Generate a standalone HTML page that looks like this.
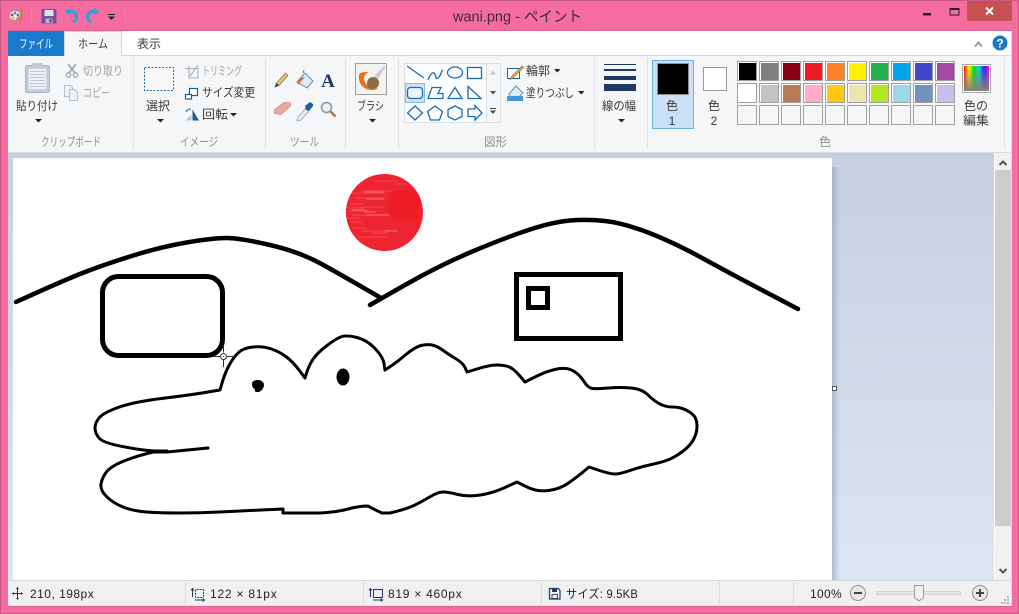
<!DOCTYPE html>
<html lang="ja">
<head>
<meta charset="utf-8">
<title>wani.png - ペイント</title>
<style>
html,body{margin:0;padding:0;width:1019px;height:614px;overflow:hidden;background:#f56c9f}
svg{display:block;position:absolute;left:0;top:0}
text{font-family:"Liberation Sans","Noto Sans CJK JP",sans-serif;font-size:12px;fill:#3a3a3a}
.c{text-anchor:middle}
.g{fill:#8f8f8f;font-size:12px}
.d{fill:#a3a3a3}
.s{font-size:12px;fill:#222;letter-spacing:.3px}
.sh{fill:none;stroke:#1e6db0;stroke-width:1.3}
</style>
</head>
<body>
<svg width="1019" height="614" viewBox="0 0 1019 614" xmlns="http://www.w3.org/2000/svg">
<defs>
<linearGradient id="bg" x1="0" y1="0" x2="0" y2="1"><stop offset="0" stop-color="#c6cfe0"/><stop offset="1" stop-color="#dce6f3"/></linearGradient>
<linearGradient id="shd" x1="0" y1="0" x2="1" y2="0"><stop offset="0" stop-color="#8fa0b8" stop-opacity=".6"/><stop offset="1" stop-color="#8fa0b8" stop-opacity="0"/></linearGradient>
<linearGradient id="rb" x1="0" y1="0" x2="1" y2="0"><stop offset="0" stop-color="#f00"/><stop offset=".2" stop-color="#ff0"/><stop offset=".4" stop-color="#0d0"/><stop offset=".6" stop-color="#0dd"/><stop offset=".8" stop-color="#22e"/><stop offset="1" stop-color="#e0e"/></linearGradient>
<linearGradient id="rb2" x1="0" y1="0" x2="0" y2="1"><stop offset="0" stop-color="#888" stop-opacity="0"/><stop offset="1" stop-color="#8a7f7a"/></linearGradient>
<clipPath id="sun"><circle cx="384.5" cy="212.5" r="38.5"/></clipPath>
</defs>

<!-- window frame -->
<rect x=".5" y=".5" width="1018" height="613" fill="#f56c9f" stroke="#c95a86"/>
<rect x="8" y="30" width="1004" height="1" fill="#d76292"/>
<rect x="8" y="606" width="1004" height="1" fill="#d76292"/>
<rect x="1011" y="31" width="1" height="575" fill="#e0e0e0"/>

<!-- title bar -->
<g>
  <path d="M9 16c0-4 4-6 7-5.500 3 .5 5 2 4.500 5-.5 2-2 1.500-3 2-1 1 0 2.500-2 3-3 .5-6.500-1-6.500-4.500z" fill="#e9e6dc" stroke="#8a8a9c" stroke-width=".8"/>
  <circle cx="12" cy="15" r="1.400" fill="#d33"/><circle cx="15" cy="13" r="1.400" fill="#2a8"/><circle cx="18" cy="15" r="1.300" fill="#36c"/><circle cx="13" cy="18.500" r="1.300" fill="#ea2"/>
  <path d="M22 7.500l-1.500 14" stroke="#e07a20" stroke-width="2"/>
  <rect x="31" y="9" width="1" height="13" fill="#c79ab0"/>
  <rect x="125" y="9" width="1" height="13" fill="#c79ab0"/>
  <path d="M42 9.500h13l1 1v12.500h-14z" fill="#7a4f9f" stroke="#5b4f8c" stroke-width=".8"/>
  <rect x="44.500" y="10" width="9" height="6" fill="#e3e3ee"/>
  <rect x="45.500" y="18.500" width="7" height="4.500" fill="#b9b6c6"/>
  <rect x="49.500" y="19" width="2" height="3.500" fill="#55506a"/>
  <path d="M66 11.500h5.500c3.500 0 5 2.500 5 5s-1.500 4.500-3.500 5.500" fill="none" stroke="#2f9fdf" stroke-width="3"/>
  <path d="M65 11.500l4.500-3.500v7z" fill="#2f9fdf"/>
  <path d="M98 11.500h-5.500c-3.500 0-5 2.500-5 5s1.500 4.500 3.500 5.500" fill="none" stroke="#2f9fdf" stroke-width="3"/>
  <path d="M99 11.500l-4.500-3.500v7z" fill="#2f9fdf"/>
  <rect x="108" y="14" width="7" height="1" fill="#222"/>
  <path d="M108 16.500h7l-3.500 3.500z" fill="#222"/>
  <text x="453" y="21.500" textLength="129" lengthAdjust="spacingAndGlyphs" style="font-size:15px;fill:#3c2c3a">wani.png - ペイント</text>
  <rect x="923" y="13" width="8" height="2.500" fill="#222"/>
  <rect x="950" y="8.500" width="9" height="6.500" fill="none" stroke="#222"/>
  <rect x="949.500" y="8" width="10" height="2" fill="#222"/>
  <rect x="967" y="1" width="45" height="20" fill="#c75050"/>
  <path d="M986 7.500l7 7m0-7l-7 7" stroke="#fff" stroke-width="2"/>
</g>

<!-- tab row -->
<rect x="8" y="31" width="1003" height="24" fill="#fff"/>
<rect x="8" y="55" width="1003" height="1" fill="#d6d8da"/>
<rect x="8" y="31" width="56" height="25" fill="#1979ca"/>
<path d="M64.500 56V31.500H121.500V56" fill="#f5f6f7" stroke="#d6d8da"/>
<rect x="65" y="55" width="56" height="2" fill="#f5f6f7"/>
<text x="19" y="48" textLength="34" lengthAdjust="spacingAndGlyphs" style="fill:#fff">ファイル</text>
<text x="78" y="48" textLength="30" lengthAdjust="spacingAndGlyphs">ホーム</text>
<text x="137" y="48" textLength="24" lengthAdjust="spacingAndGlyphs">表示</text>
<path d="M975 46.500l3.500-4 3.500 4" fill="none" stroke="#9a9a9a" stroke-width="2"/>
<circle cx="1000" cy="43" r="7.500" fill="#1b78c8"/>
<text x="1000" y="47.500" class="c" style="font-size:12px;font-weight:bold;fill:#fff">?</text>

<!-- ribbon -->
<rect x="8" y="56" width="1003" height="96" fill="#f5f6f7"/>
<rect x="8" y="152" width="1003" height="1" fill="#dadbdc"/>
<g fill="#dfe1e3">
  <rect x="133" y="58" width="1" height="91"/><rect x="265" y="58" width="1" height="91"/><rect x="345" y="58" width="1" height="91"/><rect x="398" y="58" width="1" height="91"/><rect x="594" y="58" width="1" height="91"/><rect x="647" y="58" width="1" height="91"/><rect x="1004" y="58" width="1" height="91"/>
</g>
<text x="41" y="146" class="g" textLength="60" lengthAdjust="spacingAndGlyphs">クリップボード</text>
<text x="180" y="146" class="g" textLength="38" lengthAdjust="spacingAndGlyphs">イメージ</text>
<text x="290" y="146" class="g" textLength="29" lengthAdjust="spacingAndGlyphs">ツール</text>
<text x="484" y="146" class="g" textLength="23" lengthAdjust="spacingAndGlyphs">図形</text>
<text x="825" y="146" class="c g">色</text>

<!-- clipboard -->
<rect x="25.500" y="65.500" width="24" height="27" rx="2" fill="#c3cde0" stroke="#a8b0bf"/>
<rect x="28.500" y="68.500" width="18" height="21" fill="#eef1f7" stroke="#c4cad8" stroke-width=".6"/>
<g fill="#bcc6d8"><rect x="30" y="71" width="15" height="1"/><rect x="30" y="74" width="15" height="1"/><rect x="30" y="77" width="15" height="1"/><rect x="30" y="80" width="15" height="1"/><rect x="30" y="83" width="15" height="1"/><rect x="30" y="86" width="15" height="1"/></g>
<rect x="32" y="63" width="11" height="4" rx="1" fill="#c7c9cc"/>
<text x="16" y="110" textLength="42" lengthAdjust="spacingAndGlyphs">貼り付け</text>
<path d="M35 119h7l-3.500 3.500z" fill="#222"/>
<path d="M68 64l7 9M76 64l-7 9" stroke="#a3a9b3" stroke-width="1.800"/>
<circle cx="68.500" cy="75" r="2.200" fill="none" stroke="#a3a9b3" stroke-width="1.300"/><circle cx="75.500" cy="75" r="2.200" fill="none" stroke="#a3a9b3" stroke-width="1.300"/>
<text x="83" y="75" class="d" textLength="40" lengthAdjust="spacingAndGlyphs">切り取り</text>
<path d="M64.500 85.500h6l2 2v9h-8z" fill="#eef1f5" stroke="#b9bfc9"/>
<path d="M69.500 89.500h5l3 3v8h-8z" fill="#eef1f5" stroke="#b9bfc9"/>
<text x="83" y="97" class="d" textLength="27" lengthAdjust="spacingAndGlyphs">コピー</text>

<!-- select -->
<rect x="144.500" y="67.500" width="29" height="23" fill="#fff" fill-opacity=".4" stroke="#2a6ea6" stroke-dasharray="2 1.500"/>
<text x="146" y="110" textLength="24" lengthAdjust="spacingAndGlyphs">選択</text>
<path d="M157 119h7l-3.500 3.500z" fill="#222"/>
<path d="M187 68.500h11v9.500h-9v-12M185 68.500h3M198 65l-8 11" fill="none" stroke="#a6acb8" stroke-width="1.100"/>
<text x="202" y="75" class="d" textLength="40" lengthAdjust="spacingAndGlyphs">トリミング</text>
<rect x="189.500" y="88.500" width="8" height="7" fill="#fff" stroke="#1e5f96" stroke-width="1.200"/>
<rect x="185.500" y="94.500" width="6" height="4.500" fill="#fff" stroke="#1e5f96" stroke-width="1.200"/>
<text x="202" y="96.500" textLength="53" lengthAdjust="spacingAndGlyphs">サイズ変更</text>
<path d="M192.500 120.500v-11l6.500 11z" fill="#1e5f96"/>
<path d="M191.500 120.500v-6l-6 6z" fill="#b9c8d8"/>
<path d="M186 112c1-2 3-3 5-3" fill="none" stroke="#2a7fc0" stroke-width="1.300"/>
<text x="202" y="118.500" textLength="26" lengthAdjust="spacingAndGlyphs">回転</text>
<path d="M230 113h7l-3.500 3.500z" fill="#222"/>

<!-- tools -->
<path d="M275 87l1.500-4 9-10 2.500 2.500-9 10z" fill="#e3c27c" stroke="#7a6a3a" stroke-width=".7"/>
<path d="M275 87l1.500-4 2.500 2.500z" fill="#333"/>
<path d="M297 82l8-9 8 8-6 7z" fill="#dfeaf3" stroke="#5f8fb5"/>
<path d="M297 82c2-3 5-5 8-5l-7 8z" fill="#e0703a"/>
<path d="M303 73l1-3" stroke="#777"/>
<text x="328" y="87" class="c" style="font-family:'Liberation Serif',serif;font-weight:bold;font-size:19px;fill:#1f3864">A</text>
<path d="M274.500 110l9.500-7.500 6.500.5 0 3-9.500 8.500-6.500-1z" fill="#f2a6a0" stroke="#c98a86" stroke-width=".8"/>
<path d="M298 117l8-9 3 3-8 9-4 1z" fill="#e6ecf2" stroke="#8fa0b0" stroke-width=".8"/>
<path d="M305 106l5-4 3 2 0 2-4 5-3-1z" fill="#1f5f9f"/>
<circle cx="326.500" cy="107.500" r="5" fill="#eaf2f9" stroke="#8d96a0" stroke-width="1.500"/>
<path d="M330.500 111.500l5 5" stroke="#9a7a4a" stroke-width="2.500"/>

<!-- brush -->
<rect x="355.500" y="63.500" width="31" height="31" fill="#f2f2f0" stroke="#a0a0a0"/>
<path d="M359 75c-1 8 4 15 13 15 3 0 5-1 6-2-5 1-12-2-14-8-1-3 2-7 5-8-5 0-9 0-10 3z" fill="#e8701a"/>
<path d="M370 82l9-11 6-6 0 3-6 9-5 8z" fill="#c9ccd2"/>
<circle cx="373" cy="83" r="6" fill="#8f6a48"/>
<text x="357" y="110" textLength="27" lengthAdjust="spacingAndGlyphs">ブラシ</text>
<path d="M369 119h7l-3.500 3.500z" fill="#222"/>

<!-- shapes gallery -->
<rect x="404.500" y="63.500" width="96" height="59" fill="#fbfcfd" stroke="#dcdee0"/>
<rect x="487" y="64" width="13" height="58" fill="#f5f6f7"/>
<rect x="486" y="63.500" width="1" height="59" fill="#dcdee0"/>
<rect x="405.500" y="83.500" width="19" height="19" fill="#cde4f7" stroke="#86bbe8"/>
<path d="M407 66l17 12" class="sh"/>
<path d="M428 80c2-6 5-9 7-6s0 6 3 4 3-7 5-8" class="sh"/>
<ellipse cx="455" cy="72.500" rx="7.500" ry="5.500" class="sh"/>
<rect x="467.500" y="67.500" width="14" height="11" class="sh"/>
<rect x="407.500" y="87.500" width="15" height="11" rx="3" class="sh" style="fill:#e8f3fb"/>
<path d="M428 98.500l4-11h9l-3 6h5l0 5z" class="sh"/>
<path d="M448 98.500l7-11 7 11z" class="sh"/>
<path d="M468 86.500l13 12h-13z" class="sh"/>
<path d="M415 106l7.500 7-7.500 7-7.500-7z" class="sh"/>
<path d="M435 106l7.500 5.500-3 8.500h-9l-3-8.500z" class="sh"/>
<path d="M455 106l7 3.500v7l-7 3.500-7-3.500v-7z" class="sh"/>
<path d="M468 109h7v-3.500l7 7.500-7 7v-3.500h-7z" class="sh"/>
<path d="M490 74.500l3-4 3 4z" fill="#c3c6cb"/>
<path d="M490 91l3 3.500 3-3.500z" fill="#444c5a"/>
<rect x="490" y="108" width="6" height="1" fill="#444c5a"/>
<path d="M490 110.500h6l-3 3.500z" fill="#444c5a"/>

<!-- outline / fill -->
<rect x="507.500" y="68.500" width="12" height="10" fill="#fff" stroke="#2b5f8f"/>
<path d="M511 77l11-11 1.500 1.500-11 11-2.500 1z" fill="#e3b23c" stroke="#7a6a3a" stroke-width=".6"/>
<text x="526" y="75" textLength="24" lengthAdjust="spacingAndGlyphs">輪郭</text>
<path d="M554 69h6.500l-3.250 3.500z" fill="#222"/>
<path d="M509 94l7-8 7 7-6 6h-6z" fill="#dfeaf3" stroke="#5f8fb5"/>
<rect x="507" y="96" width="16" height="5" fill="#4a96d6"/>
<text x="526" y="97" textLength="48" lengthAdjust="spacingAndGlyphs">塗りつぶし</text>
<path d="M578 91h6.500l-3.250 3.500z" fill="#222"/>

<!-- line width -->
<g fill="#1f3864"><rect x="604" y="64" width="32" height="1"/><rect x="604" y="69" width="32" height="2"/><rect x="604" y="76" width="32" height="4"/><rect x="604" y="84" width="32" height="7"/></g>
<text x="602" y="110" textLength="34" lengthAdjust="spacingAndGlyphs">線の幅</text>
<path d="M618 119h7l-3.500 3.500z" fill="#222"/>

<!-- color 1 / 2 -->
<rect x="652.500" y="60.500" width="41" height="68" fill="#c9e0f7" stroke="#6fb0ea"/>
<rect x="657.500" y="63.500" width="31" height="31" fill="#000" stroke="#8f8f8f" stroke-width="1"/>
<text x="672" y="110" class="c">色</text>
<text x="672" y="125" class="c">1</text>
<rect x="703.500" y="67.500" width="23" height="23" fill="#fff" stroke="#9a9a9a"/>
<text x="714" y="110" class="c">色</text>
<text x="714" y="125" class="c">2</text>

<!-- palette -->
<g stroke="#a0a0a0" fill="#fff">
<rect x="737.500" y="61.500" width="19" height="19"/><rect x="759.500" y="61.500" width="19" height="19"/><rect x="781.500" y="61.500" width="19" height="19"/><rect x="803.500" y="61.500" width="19" height="19"/><rect x="825.500" y="61.500" width="19" height="19"/><rect x="847.500" y="61.500" width="19" height="19"/><rect x="869.500" y="61.500" width="19" height="19"/><rect x="891.500" y="61.500" width="19" height="19"/><rect x="913.500" y="61.500" width="19" height="19"/><rect x="935.500" y="61.500" width="19" height="19"/>
<rect x="737.500" y="83.500" width="19" height="19"/><rect x="759.500" y="83.500" width="19" height="19"/><rect x="781.500" y="83.500" width="19" height="19"/><rect x="803.500" y="83.500" width="19" height="19"/><rect x="825.500" y="83.500" width="19" height="19"/><rect x="847.500" y="83.500" width="19" height="19"/><rect x="869.500" y="83.500" width="19" height="19"/><rect x="891.500" y="83.500" width="19" height="19"/><rect x="913.500" y="83.500" width="19" height="19"/><rect x="935.500" y="83.500" width="19" height="19"/>
</g>
<g stroke="#a0a0a0" fill="#f5f6f7">
<rect x="737.500" y="105.500" width="19" height="19"/><rect x="759.500" y="105.500" width="19" height="19"/><rect x="781.500" y="105.500" width="19" height="19"/><rect x="803.500" y="105.500" width="19" height="19"/><rect x="825.500" y="105.500" width="19" height="19"/><rect x="847.500" y="105.500" width="19" height="19"/><rect x="869.500" y="105.500" width="19" height="19"/><rect x="891.500" y="105.500" width="19" height="19"/><rect x="913.500" y="105.500" width="19" height="19"/><rect x="935.500" y="105.500" width="19" height="19"/>
</g>
<rect x="739" y="63" width="17" height="17" fill="#000"/><rect x="761" y="63" width="17" height="17" fill="#7f7f7f"/><rect x="783" y="63" width="17" height="17" fill="#880015"/><rect x="805" y="63" width="17" height="17" fill="#ed1c24"/><rect x="827" y="63" width="17" height="17" fill="#ff7f27"/><rect x="849" y="63" width="17" height="17" fill="#fff200"/><rect x="871" y="63" width="17" height="17" fill="#22b14c"/><rect x="893" y="63" width="17" height="17" fill="#00a2e8"/><rect x="915" y="63" width="17" height="17" fill="#3f48cc"/><rect x="937" y="63" width="17" height="17" fill="#a349a4"/>
<rect x="739" y="85" width="17" height="17" fill="#fff"/><rect x="761" y="85" width="17" height="17" fill="#c3c3c3"/><rect x="783" y="85" width="17" height="17" fill="#b97a57"/><rect x="805" y="85" width="17" height="17" fill="#ffaec9"/><rect x="827" y="85" width="17" height="17" fill="#ffc90e"/><rect x="849" y="85" width="17" height="17" fill="#efe4b0"/><rect x="871" y="85" width="17" height="17" fill="#b5e61d"/><rect x="893" y="85" width="17" height="17" fill="#99d9ea"/><rect x="915" y="85" width="17" height="17" fill="#7092be"/><rect x="937" y="85" width="17" height="17" fill="#c8bfe7"/>

<!-- edit colors -->
<rect x="962.500" y="64.500" width="28" height="28" fill="#fff" stroke="#a8a8a8"/>
<rect x="964" y="66" width="25" height="25" fill="url(#rb)"/>
<rect x="964" y="66" width="25" height="25" fill="url(#rb2)"/>
<text x="964" y="110" textLength="24" lengthAdjust="spacingAndGlyphs">色の</text>
<text x="963" y="124.500" textLength="26" lengthAdjust="spacingAndGlyphs">編集</text>

<!-- canvas area -->
<rect x="8" y="153" width="987" height="427" fill="url(#bg)"/>
<rect x="832" y="167" width="8" height="413" fill="url(#shd)"/>
<rect x="13" y="158" width="819" height="422" fill="#fff"/>
<rect x="832.500" y="386.500" width="4" height="4" fill="#fff" stroke="#555"/>

<!-- scrollbar -->
<rect x="994" y="153" width="1" height="427" fill="#fff"/>
<rect x="995" y="153" width="16" height="427" fill="#f0f0f0"/>
<rect x="995" y="170" width="16" height="356" fill="#cdcdcd"/>
<path d="M999.500 165l3.500-3.500 3.500 3.500" fill="none" stroke="#555" stroke-width="2"/>
<path d="M999.500 569l3.500 3.500 3.500-3.500" fill="none" stroke="#555" stroke-width="2"/>

<!-- drawing -->
<g clip-path="url(#sun)">
  <rect x="340" y="170" width="90" height="85" fill="#ee2431"/>
  <g stroke="#f4636b" stroke-width="1" opacity=".6">
    <path d="M352 193h34M362 191h30M356 198h30M350 204h14M348 211h22M352 215h44M346 218h14M350 222h12M352 228h14M362 231h28M372 233h16M358 237h30M394 184h12M362 207h22M348 208h16M375 181h22"/>
  </g>
  <g stroke="#f89a9f" stroke-width="1" opacity=".6">
    <path d="M364 192h20M366 199h18M352 210h14M364 212h12M366 215h24M385 231h12"/>
  </g>
  <path d="M392 192q14-4 28 2v24q-16 6-30-2q-4-12 2-24z" fill="#ed1c24" opacity=".85"/>
</g>
<g fill="none" stroke="#000" stroke-linejoin="round" stroke-linecap="round">
  <path stroke-width="4.5" d="M16 302Q60 282 80 274Q100 266 130 256.5Q160 247 186.5 242.5Q213 238 226.5 238Q240 238 270 245Q300 252 322.5 264.5Q345 277 381 298"/>
  <path stroke-width="4.5" d="M370 305L405 285Q440 265 473.5 251Q507 237 530 229.5Q553 222 570 220.5Q587 219 605 221Q623 223 648 232.5Q673 242 703 258.5Q733 275 798 309"/>
  <rect x="102.5" y="276.5" width="120" height="79" rx="16" stroke-width="5"/>
  <rect x="516.5" y="274.5" width="104" height="64" stroke-width="5" stroke-linejoin="miter"/>
  <rect x="528.5" y="288.5" width="19" height="19" stroke-width="5" stroke-linejoin="miter"/>
  <path stroke-width="3" d="M208 448L167 452L153 452Q133 457 121.5 462Q110 467 106 472.5Q102 478 101 484Q100 490 106.5 496.5Q113 503 123 507Q133 511 146.5 512Q160 513 180 513Q200 513 220 512Q240 511 261 510L283 509L283 513L320 513Q338 512 350 508.5Q360 506 368 506Q375 510 382 513L390 513Q407 509 415 505Q423 501 430.5 496.5Q438 492 443 492Q448 492 458 494.5Q468 497 480.5 495Q493 493 505 487.5L517 482L527 487Q537 492 548.5 490.5Q560 489 568.5 483Q577 477 583 472L589 467L599.5 470.5Q610 474 615 474Q620 474 630 470.5Q640 467 651.5 464.5Q663 462 669 459.5Q675 457 682.5 451.5Q690 446 693.5 439.5Q697 433 697 426.5Q697 420 694.5 416.5Q692 413 686 410Q680 407 672.5 407Q665 407 659 403.5Q653 400 647.5 394.5Q642 389 631 388Q620 387 608.5 388Q597 389 592.5 388.5Q588 388 584 381.5Q580 375 573.5 371Q567 367 557 369Q547 371 536 376.5L525 382L519 375Q513 368 508 366.5Q503 365 496.5 365Q490 365 478.5 368.5L467 372L465 367.5Q463 363 455.5 358.5Q448 354 442.5 350Q437 346 432 345Q427 344 421 345.5Q415 347 406 354.5Q397 362 391 366L385 370"/>
  <path stroke-width="3" d="M385 370L384 363.5Q383 357 375 348.5Q367 340 357 337.5Q347 335 342 336.5Q337 338 327 345.5Q317 353 312.5 360Q308 367 305 378L299 370Q293 362 286.5 357Q280 352 271.5 349Q263 346 253 347Q243 348 238 353Q233 358 229 365.5Q225 373 222.5 381.5L220 390L205 392.5Q190 395 161.5 398.5Q133 402 118 407.5Q103 413 99 418Q95 423 95 428Q95 433 99 438Q103 443 125 447Q147 451 157 451L167 451"/>
</g>
<path d="M252 384c0-3 3-4 6-4s6 2 6 5-3 7-6 7-4-1-3-3c-2 0-3-3-3-5z" fill="#000"/>
<ellipse cx="343" cy="377" rx="6.5" ry="8.5" fill="#000"/>
<g stroke="#333" stroke-width="1" fill="none">
  <path d="M223.5 345v7.5M223.5 360v7M213 356.5h7.500M227 356.5h7"/>
  <circle cx="223.5" cy="356.5" r="3" fill="#fff"/>
</g>
<rect x="223" y="356" width="1" height="1" fill="#333"/>

<!-- status bar -->
<rect x="8" y="580" width="1003" height="26" fill="#f0f0f0"/>
<rect x="8" y="580" width="1003" height="1" fill="#d9d9d9"/>
<g fill="#d9d9d9"><rect x="185" y="582" width="1" height="23"/><rect x="363" y="582" width="1" height="23"/><rect x="541" y="582" width="1" height="23"/><rect x="719" y="582" width="1" height="23"/><rect x="793" y="582" width="1" height="23"/></g>
<path d="M17.500 587v12M12 593.500h11" stroke="#1f3864"/>
<path d="M16 589l1.500-2 1.500 2zM16 598l1.500 2 1.500-2zM14 592l-2 1.500 2 1.500zM21 592l2 1.500-2 1.500z" fill="#1f3864"/>
<text x="30" y="598" class="s" textLength="64">210, 198px</text>
<rect x="195.500" y="589.500" width="8" height="8" rx="1" fill="none" stroke="#1f3864" stroke-dasharray="2 1"/>
<path d="M192.500 589v8M191 590.500l1.500-2 1.500 2M195 600h9M202.500 598.500l2 1.500-2 1.500" fill="none" stroke="#1f3864"/>
<text x="210" y="598" class="s" textLength="67">122 × 81px</text>
<rect x="373.500" y="589.500" width="9" height="8" fill="none" stroke="#1f3864"/>
<path d="M370.500 589v8M369 590.500l1.500-2 1.500 2M373 600h9M380.500 598.500l2 1.500-2 1.500" fill="none" stroke="#1f3864"/>
<text x="388" y="598" class="s" textLength="74">819 × 460px</text>
<path d="M549.500 588.500h8.500l2 2v8.500h-10.500z" fill="none" stroke="#1f3864" stroke-width="1.200"/>
<rect x="552" y="589" width="5" height="3" fill="#1f3864"/><rect x="552" y="594.500" width="5.500" height="4" fill="none" stroke="#1f3864" stroke-width=".9"/>
<text x="566" y="598" class="s" textLength="72" lengthAdjust="spacingAndGlyphs">サイズ: 9.5KB</text>
<text x="810" y="598" class="s" textLength="32">100%</text>
<circle cx="858" cy="593" r="7.500" fill="#e8e8e8" stroke="#8f8f8f"/>
<rect x="854" y="592" width="8" height="2" fill="#444"/>
<rect x="876.500" y="591.500" width="84" height="3" fill="#e6e6e6" stroke="#d4d4d4"/>
<path d="M914.500 585.500h9v12l-4.500 3.500-4.500-3.500z" fill="#f0f0f0" stroke="#9a9a9a"/>
<circle cx="980" cy="593" r="7.500" fill="#e8e8e8" stroke="#8f8f8f"/>
<path d="M976 592h3v-3h2v3h3v2h-3v3h-2v-3h-3z" fill="#444"/>
<g fill="#b8b8b8"><rect x="1007" y="596" width="2" height="2"/><rect x="1004" y="599" width="2" height="2"/><rect x="1007" y="599" width="2" height="2"/><rect x="1001" y="602" width="2" height="2"/><rect x="1004" y="602" width="2" height="2"/><rect x="1007" y="602" width="2" height="2"/></g>
</svg>
</body>
</html>
